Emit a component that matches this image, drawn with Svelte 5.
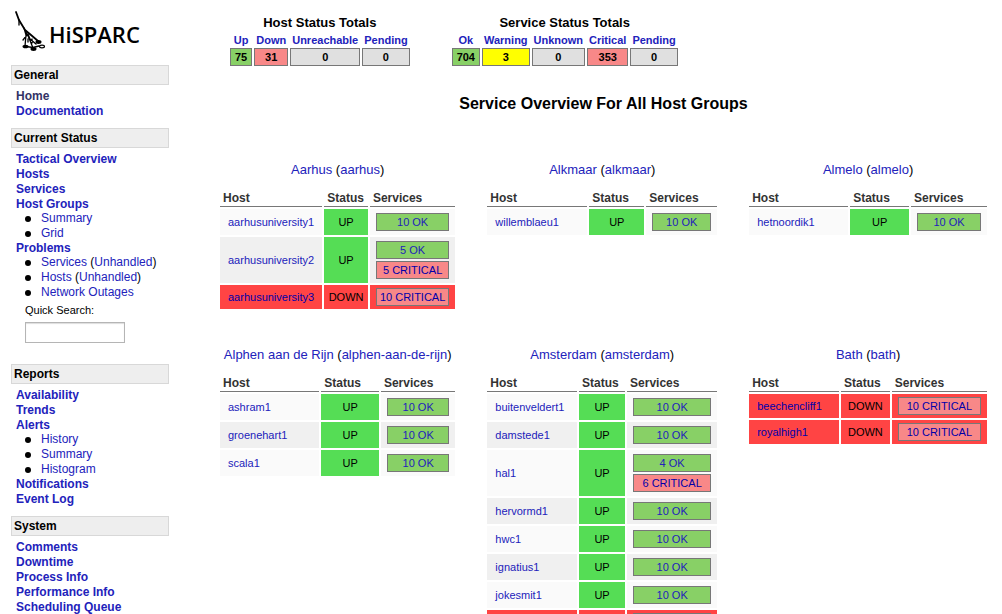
<script>
  const menu = [
    { title: 'General', items: [{ label: 'Home', visited: true }, { label: 'Documentation' }] },
    {
      title: 'Current Status',
      search: true,
      items: [
        { label: 'Tactical Overview' },
        { label: 'Hosts' },
        { label: 'Services' },
        { label: 'Host Groups', sub: [{ label: 'Summary' }, { label: 'Grid' }] },
        {
          label: 'Problems',
          sub: [
            { label: 'Services', extra: 'Unhandled' },
            { label: 'Hosts', extra: 'Unhandled' },
            { label: 'Network Outages' }
          ]
        }
      ]
    },
    {
      title: 'Reports',
      items: [
        { label: 'Availability' },
        { label: 'Trends' },
        { label: 'Alerts', sub: [{ label: 'History' }, { label: 'Summary' }, { label: 'Histogram' }] },
        { label: 'Notifications' },
        { label: 'Event Log' }
      ]
    },
    {
      title: 'System',
      items: [
        { label: 'Comments' },
        { label: 'Downtime' },
        { label: 'Process Info' },
        { label: 'Performance Info' },
        { label: 'Scheduling Queue' }
      ]
    }
  ];

  const totals = [
    {
      title: 'Host Status Totals',
      cells: [['Up', 75, 'ok'], ['Down', 31, 'critical'], ['Unreachable', 0, 'none'], ['Pending', 0, 'none']]
    },
    {
      title: 'Service Status Totals',
      cells: [['Ok', 704, 'ok'], ['Warning', 3, 'warning'], ['Unknown', 0, 'none'], ['Critical', 353, 'critical'], ['Pending', 0, 'none']]
    }
  ];

  const host = (name, ok = 10, critical = 0, up = true) => ({ name, ok, critical, up });

  const groups = [
    {
      name: 'Aarhus', id: 'aarhus',
      hosts: [host('aarhusuniversity1'), host('aarhusuniversity2', 5, 5), host('aarhusuniversity3', 0, 10, false)]
    },
    { name: 'Alkmaar', id: 'alkmaar', hosts: [host('willemblaeu1')] },
    { name: 'Almelo', id: 'almelo', hosts: [host('hetnoordik1')] },
    { name: 'Alphen aan de Rijn', id: 'alphen-aan-de-rijn', hosts: [host('ashram1'), host('groenehart1'), host('scala1')] },
    {
      name: 'Amsterdam', id: 'amsterdam',
      hosts: [
        host('buitenveldert1'), host('damstede1'), host('hal1', 4, 6), host('hervormd1'),
        host('hwc1'), host('ignatius1'), host('jokesmit1'), host('', 0, 10, false)
      ]
    },
    { name: 'Bath', id: 'bath', hosts: [host('beechencliff1', 0, 10, false), host('royalhigh1', 0, 10, false)] }
  ];
</script>

<div class="page">
  <nav class="side">
    <a class="logo" href="#home">
      <svg width="32" height="42" viewBox="0 0 32 42" aria-hidden="true">
        <g fill="none" stroke="#000" stroke-linecap="round">
          <path stroke-width="1.8" d="M1 1 4 9 10 19 16 24 23 30" />
          <path stroke-width="1.3" d="M4 9V14M9 17 11 24 10 35M10 19 14 27 18 37M13 23 15 28 21 33M12 24 8 29M13 28 13 31M17 28V32" />
          <path stroke-width="1.3" d="M11 35.500 18 36.500 24 35" />
          <ellipse cx="27" cy="35.500" rx="2.500" ry="1.400" stroke-width="1.200" />
        </g>
        <ellipse cx="10.500" cy="35.500" rx="3" ry="1.800" />
        <ellipse cx="18.500" cy="38" rx="3" ry="1.900" />
        <ellipse cx="23.500" cy="31" rx="3" ry="1.900" />
      </svg>
      <span>HiSPARC</span>
    </a>
    {#each menu as section}
      <section>
        <h2>{section.title}</h2>
        <ul>
          {#each section.items as item}
            <li>
              <a class="item" class:parent={item.sub} class:visited={item.visited} href="#top">{item.label}</a>
              {#if item.sub}
                <ul class="sub">
                  {#each item.sub as child}
                    <li><a href="#top">{child.label}</a>{#if child.extra}{' '}(<a href="#top">{child.extra}</a>){/if}</li>
                  {/each}
                </ul>
              {/if}
            </li>
          {/each}
        </ul>
        {#if section.search}
          <form>
            <label for="search">Quick Search:</label>
            <input id="search" type="text" />
          </form>
        {/if}
      </section>
    {/each}
  </nav>

  <main>
    <div class="totals">
      {#each totals as total}
        <table>
          <caption>{total.title}</caption>
          <thead>
            <tr>{#each total.cells as [label]}<th><a href="#top">{label}</a></th>{/each}</tr>
          </thead>
          <tbody>
            <tr>{#each total.cells as [, count, tone]}<td class={tone}>{count}</td>{/each}</tr>
          </tbody>
        </table>
      {/each}
    </div>

    <h1>Service Overview For All Host Groups</h1>

    <div class="groups">
      {#each groups as group}
        <table class="group">
          <caption><a href="#top">{group.name}</a> (<a href="#top">{group.id}</a>)</caption>
          <thead>
            <tr><th>Host</th><th>Status</th><th>Services</th></tr>
          </thead>
          <tbody>
            {#each group.hosts as h}
              <tr class:down={!h.up}>
                <td class="name"><a href="#top">{h.name}</a></td>
                <td class="status">{h.up ? 'UP' : 'DOWN'}</td>
                <td class="services">
                  <div>
                    {#if h.ok}<a class="pill ok" href="#top">{h.ok} OK</a>{/if}
                    {#if h.critical}<a class="pill critical" href="#top">{h.critical} CRITICAL</a>{/if}
                  </div>
                </td>
              </tr>
            {/each}
          </tbody>
        </table>
      {/each}
    </div>
  </main>
</div>

<style>
  :global(body) {
    margin: 0;
    background: #fff;
  }
  .page {
    display: grid;
    grid-template-columns: 169px 1fr;
    height: 100vh;
    overflow: hidden;
    font: 12px/15px 'Liberation Sans', Arial, sans-serif;
    color: #000;
  }
  a {
    color: #2222bb;
    text-decoration: none;
  }
  ul {
    margin: 0;
    padding: 0;
    list-style: none;
  }

  .side {
    padding: 11px 0 0 11px;
  }
  .side .logo {
    display: flex;
    gap: 2px;
    height: 54px;
    padding-left: 4px;
    box-sizing: border-box;
    color: #000;
    font: 600 22px/46px 'Open Sans', sans-serif;
  }
  .side section {
    margin-bottom: 9px;
  }
  .side h2 {
    margin: 0 0 4px;
    padding: 0 2px;
    border: 1px solid #d8d8d8;
    background: #eee;
    font-size: 12px;
    line-height: 18px;
  }
  .side section > ul {
    padding-left: 5px;
  }
  .item {
    display: block;
    font-weight: bold;
  }
  .parent {
    line-height: 14px;
  }
  .visited {
    color: #333366;
  }
  .sub {
    padding-left: 9px;
  }
  .sub li {
    display: flex;
    align-items: center;
    white-space: pre;
  }
  .sub li::before {
    content: '';
    width: 6px;
    height: 6px;
    margin-right: 10px;
    border-radius: 50%;
    background: #000;
  }
  form {
    padding: 3px 0 12px 14px;
  }
  label {
    display: block;
    font-size: 11px;
  }
  input {
    display: block;
    width: 100px;
    height: 21px;
    margin-top: 4px;
    box-sizing: border-box;
    border: 1px solid #b5b5b5;
    background: #fff;
    box-shadow: inset 0 1px 1px #ddd;
  }

  main {
    padding: 14px 15px 0 51px;
  }
  .totals {
    display: flex;
    gap: 38px;
    padding-left: 8px;
  }
  table {
    border-spacing: 2px;
  }
  .totals caption {
    font-size: 13px;
    font-weight: bold;
    line-height: 17px;
  }
  .totals th,
  .totals td {
    font-size: 11px;
    font-weight: bold;
    text-align: center;
  }
  .totals th {
    padding: 1px 2px 0;
    line-height: 12px;
  }
  .totals td {
    padding: 0 4px;
    border: 1px solid #777;
    line-height: 16px;
  }
  .ok {
    background: #88d066;
  }
  .critical {
    background: #f88888;
  }
  .warning {
    background: #ffff00;
  }
  .none {
    background: #e0e0e0;
  }
  h1 {
    margin: 26px 0 48px;
    font-size: 16px;
    line-height: 20px;
    text-align: center;
  }
  .groups {
    display: grid;
    grid-template-columns: 239fr 234fr 242fr;
    gap: 36px 28px;
    align-items: start;
    margin: 0 -2px;
  }
  .group {
    width: 100%;
  }
  .group caption {
    padding-bottom: 9px;
    font-size: 13px;
    line-height: 16px;
  }
  .group th {
    padding: 1px 4px 0 3px;
    border-bottom: 1px solid #777;
    color: #333;
    line-height: 16px;
    text-align: left;
  }
  .group td {
    padding: 4px 3px;
    background: #fafafa;
    font-size: 11px;
  }
  .group tr:nth-child(even) td {
    background: #f0f0f0;
  }
  .group td.name {
    padding: 4px 8px;
  }
  .group tr td.status {
    background: #55dd55;
    text-align: center;
  }
  .group td.services {
    padding: 4px 6px;
  }
  .services div {
    display: grid;
    gap: 2px;
  }
  .pill {
    padding: 0 3px;
    border: 1px solid #777;
    line-height: 16px;
    text-align: center;
    white-space: nowrap;
  }
  .group tr.down td,
  .group tr.down:nth-child(even) td {
    padding-top: 3px;
    padding-bottom: 3px;
    background: #ff4444;
  }
  .down a,
  .pill.critical {
    color: #0000aa;
  }
</style>
